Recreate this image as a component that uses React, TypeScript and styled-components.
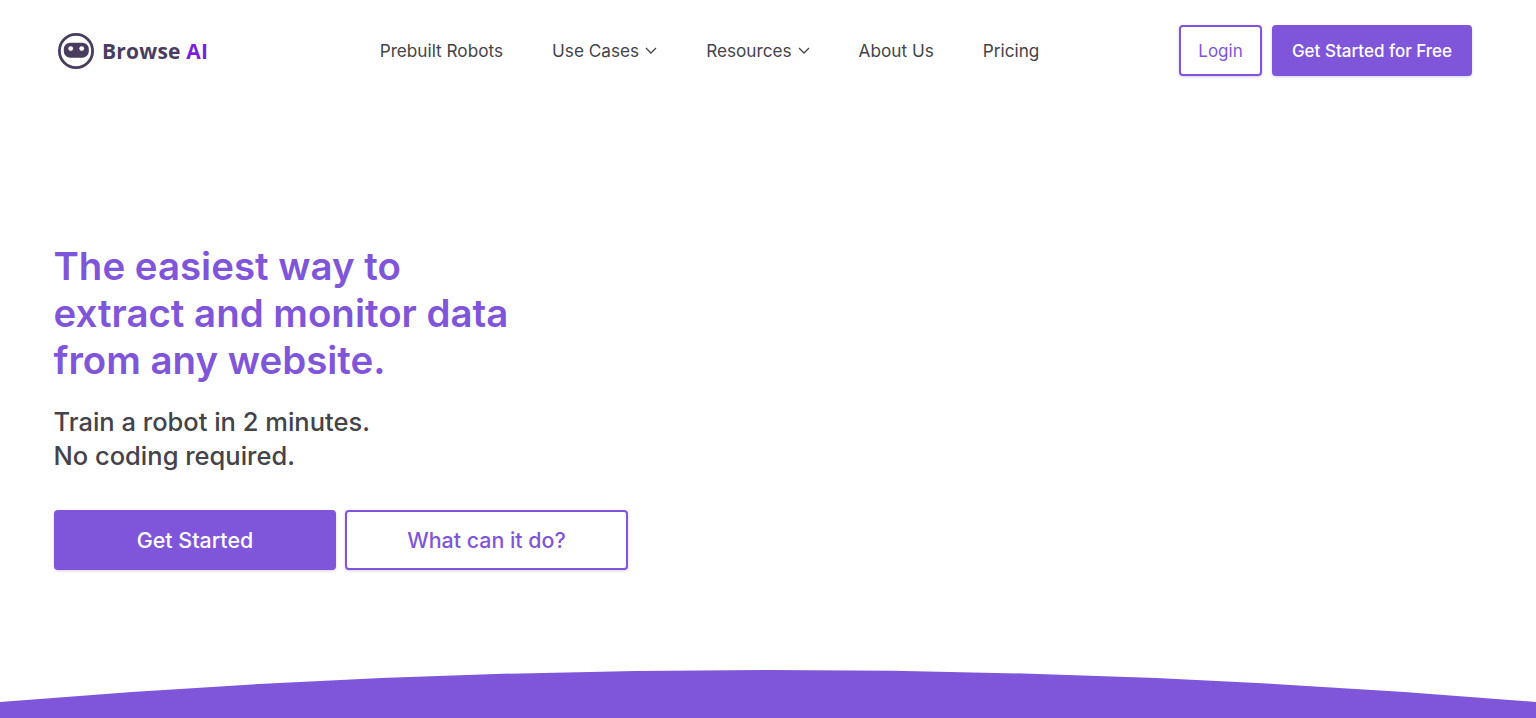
import React from 'react';
import styled, { createGlobalStyle } from 'styled-components';

const purple = '#7f56d9';

const GlobalStyle = createGlobalStyle`
  html, body {
    margin: 0;
    padding: 0;
    height: 100%;
    overflow: hidden;
    background: #fff;
    font-family: Inter, "Liberation Sans", sans-serif;
  }
  #root {
    height: 100%;
  }
`;

const Page = styled.div`
  height: 718px;
  display: flex;
  flex-direction: column;
  background: #fff;
`;

const Header = styled.header`
  height: 102px;
  box-sizing: border-box;
  padding: 25px 64px 0 58px;
  display: flex;
  justify-content: space-between;
  align-items: flex-start;
`;

const Logo = styled.a`
  display: flex;
  align-items: center;
  gap: 8px;
  height: 51px;
  width: 151px;
`;

const LogoText = styled.span`
  font-family: "Open Sans", sans-serif;
  font-size: 21px;
  font-weight: 700;
  letter-spacing: 0.2px;
  color: #4a3c5e;
  white-space: nowrap;
`;

const LogoAccent = styled.span`
  color: #7a1fe0;
`;

const Nav = styled.nav`
  display: flex;
  align-items: center;
  gap: 49px;
  height: 51px;
  margin-left: 31px;
`;

const NavItem = styled.a`
  display: flex;
  align-items: center;
  gap: 6px;
  font-size: 17.2px;
  font-weight: 400;
  color: #444349;
  white-space: nowrap;
`;

const Actions = styled.div`
  display: flex;
  gap: 10px;
`;

const Button = styled.a<{ $outline?: boolean; $large?: boolean; $width: number }>`
  box-sizing: border-box;
  display: flex;
  align-items: center;
  justify-content: center;
  width: ${p => p.$width}px;
  height: ${p => (p.$large ? 60 : 51)}px;
  border-radius: 4px;
  border: 2px solid ${purple};
  background: ${p => (p.$outline ? '#fff' : purple)};
  color: ${p => (p.$outline ? purple : '#fff')};
  font-size: ${p => (p.$large ? 21.4 : 17)}px;
  font-weight: ${p => (p.$outline && !p.$large ? 400 : 500)};
  white-space: nowrap;
  box-shadow: 0 1px 3px rgba(127, 86, 217, 0.3);
`;

const Hero = styled.section`
  flex: 1;
  padding: 141px 0 0 54px;
`;

const Title = styled.h1`
  margin: 0 0 0 -0.5px;
  font-size: 38.45px;
  line-height: 47px;
  font-weight: 600;
  color: ${purple};
`;

const Subtitle = styled.p`
  margin: 21px 0 0 -0.5px;
  font-size: 25.5px;
  line-height: 34px;
  font-weight: 550;
  color: #444349;
`;

const HeroActions = styled.div`
  display: flex;
  gap: 9px;
  margin-top: 37px;
`;

const Wave = styled.svg`
  display: block;
  flex: none;
  width: 1536px;
  height: 48px;
`;

const RobotLogo = () => (
  <svg width="36" height="36" viewBox="0 0 36 36" fill="none">
    <circle cx="18" cy="18" r="16.6" stroke="#4a3c5e" strokeWidth="2.8" />
    <rect x="5.8" y="9.7" width="25" height="15" rx="6.5" fill="#4a3c5e" />
    <circle cx="12.7" cy="15.6" r="2.4" fill="#fff" />
    <circle cx="23.7" cy="15.6" r="2.4" fill="#fff" />
  </svg>
);

const Chevron = () => (
  <svg width="12" height="7" viewBox="0 0 12 7" fill="none">
    <path d="M1 1l5 5 5-5" stroke="#444349" strokeWidth="1.3" />
  </svg>
);

const App: React.FC = () => {
  return (
    <Page>
      <GlobalStyle />
      <Header>
        <Logo>
          <RobotLogo />
          <LogoText>
            Browse <LogoAccent>AI</LogoAccent>
          </LogoText>
        </Logo>
        <Nav>
          <NavItem>Prebuilt Robots</NavItem>
          <NavItem>
            Use Cases <Chevron />
          </NavItem>
          <NavItem>
            Resources <Chevron />
          </NavItem>
          <NavItem>About Us</NavItem>
          <NavItem>Pricing</NavItem>
        </Nav>
        <Actions>
          <Button $outline $width={83}>Login</Button>
          <Button $width={200}>Get Started for Free</Button>
        </Actions>
      </Header>
      <Hero>
        <Title>
          The easiest way to
          <br />
          extract and monitor data
          <br />
          from any website.
        </Title>
        <Subtitle>
          Train a robot in 2 minutes.
          <br />
          No coding required.
        </Subtitle>
        <HeroActions>
          <Button $large $width={282}>Get Started</Button>
          <Button $large $outline $width={283}>What can it do?</Button>
        </HeroActions>
      </Hero>
      <Wave viewBox="0 0 1536 48" preserveAspectRatio="none">
        <path d="M0 32 Q768 -32 1536 32 V48 H0 Z" fill={purple} />
      </Wave>
    </Page>
  );
};

export default App;
